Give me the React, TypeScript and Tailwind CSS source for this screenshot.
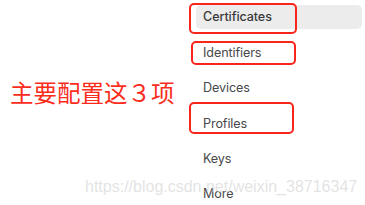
import React from "react";

const items = ["Certificates", "Identifiers", "Devices", "Profiles", "Keys", "More"];

export default function App() {
  return (
    <div className="relative w-[365px] h-[205px] bg-white overflow-hidden flex">
      <div className="w-[196px] shrink-0 pl-[10px]">
        <div
          className="mt-[80px] text-[23.5px] leading-[24px] text-[#fb2c1c] whitespace-nowrap"
          style={{ fontFamily: '"Noto Sans CJK SC", "Noto Sans", sans-serif' }}
        >
          主要配置这３项
        </div>
      </div>
      <div
        className="w-[166px] shrink-0 flex flex-col pt-[5px] gap-[11.5px] text-[12.6px] tracking-[-0.1px] text-[#48484a]"
        style={{ fontFamily: 'Inter, "Noto Sans", sans-serif' }}
      >
        {items.map((t, i) => (
          <div
            key={t}
            className={
              i === 0
                ? "h-[24px] flex items-center pl-[7px] pt-[2px] rounded-[5px] bg-[#ececec] font-medium text-[#3a3a3c]"
                : "h-[24px] flex items-center pl-[7px] pt-[3px]"
            }
          >
            {t}
          </div>
        ))}
      </div>

      <div className="absolute left-[189px] top-[3px] w-[108px] h-[31px] border-2 border-[#f8261a] rounded-[5px]" />
      <div className="absolute left-[191px] top-[41px] w-[105px] h-[24px] border-2 border-[#f8261a] rounded-[5px]" />
      <div className="absolute left-[189px] top-[102px] w-[105px] h-[32px] border-2 border-[#f8261a] rounded-[5px]" />

      <div
        className="absolute left-[85px] top-[179px] text-[16px] leading-[16px] text-[#dcdcdc]/80 whitespace-nowrap"
        style={{ fontFamily: '"Liberation Sans", Arial, sans-serif' }}
      >
        https://blog.csdn.net/weixin_38716347
      </div>
    </div>
  );
}
